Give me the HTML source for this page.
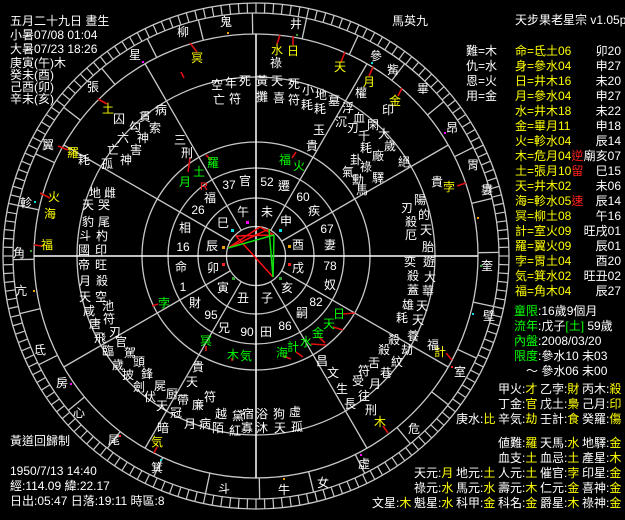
<!DOCTYPE html>
<html><head><meta charset="utf-8"><style>
html,body{margin:0;padding:0;background:#000;}
svg{display:block;}
text{font-family:"Liberation Sans","Noto Sans CJK TC","WenQuanYi Zen Hei",sans-serif;font-size:12px;fill:#fff;}
.c{text-anchor:middle;dominant-baseline:central;}
.y{fill:#ffff00;} .g{fill:#00ff00;} .r{fill:#ff2020;} .gr{fill:#8a8a8a;}
</style></head><body>
<svg width="625" height="520" viewBox="0 0 625 520" xmlns="http://www.w3.org/2000/svg">
<rect width="625" height="520" fill="#000"/>
<g fill="none" stroke="#c8c8c8" stroke-width="1.3">
<circle cx="256" cy="256" r="29.5"/>
<circle cx="256" cy="256" r="58"/>
<circle cx="256" cy="256" r="88"/>
<circle cx="256" cy="256" r="114"/>
<circle cx="256" cy="256" r="179"/>
<circle cx="256" cy="256" r="222"/>
<circle cx="256" cy="256" r="243"/>
<circle cx="256" cy="256" r="253"/>
</g>
<g id="spokes" stroke="#c8c8c8" stroke-width="1.3"></g>
<g id="ticks" stroke="#c8c8c8" stroke-width="1.2"></g>
<g id="mans" stroke="#c8c8c8" stroke-width="1.3"></g>
<line x1="34" y1="256" x2="478" y2="256" stroke="#fff" stroke-width="1.5"/>
<line x1="256" y1="34" x2="256" y2="478" stroke="#fff" stroke-width="1.5"/>
<g stroke-width="1.5">
<line x1="228" y1="248" x2="269" y2="229" stroke="#ff1010"/>
<line x1="228" y1="248" x2="260" y2="227" stroke="#ff1010"/>
<line x1="236" y1="236" x2="273" y2="277" stroke="#ff1010"/>
<line x1="236" y1="236" x2="274" y2="235" stroke="#ff1010"/>
<line x1="260" y1="227" x2="274" y2="235" stroke="#ff1010"/>
<line x1="228" y1="248" x2="274" y2="235" stroke="#10e010"/>
<line x1="269" y1="229" x2="273" y2="277" stroke="#10e010"/>
<line x1="274" y1="235" x2="273" y2="277" stroke="#10e010"/>
</g>
<g stroke="#e01010" stroke-width="1.6">
<line x1="190" y1="43" x2="197" y2="52"/><line x1="280" y1="35" x2="277" y2="44"/><line x1="293" y1="36" x2="293" y2="45"/>
<line x1="345" y1="52" x2="341" y2="62"/><line x1="373" y1="67" x2="369" y2="76"/><line x1="402" y1="88" x2="398" y2="96"/>
<line x1="98" y1="99" x2="107" y2="104"/><line x1="58" y1="146" x2="68" y2="150"/><line x1="40" y1="193" x2="50" y2="198"/>
<line x1="34" y1="245" x2="42" y2="246"/><line x1="466" y1="183" x2="457" y2="186"/><line x1="452" y1="360" x2="446" y2="353"/>
<line x1="388" y1="433" x2="383" y2="426"/><line x1="154" y1="453" x2="157" y2="447"/><line x1="184" y1="78" x2="181" y2="72"/>
<line x1="206" y1="155" x2="211" y2="160"/><line x1="190" y1="158" x2="188" y2="172"/><line x1="296" y1="152" x2="292" y2="158"/>
<line x1="152" y1="306" x2="158" y2="304"/><line x1="206" y1="351" x2="206" y2="346"/><line x1="232" y1="361" x2="232" y2="358"/>
<line x1="291" y1="359" x2="283" y2="356"/><line x1="303" y1="357" x2="296" y2="352"/><line x1="326" y1="345" x2="311" y2="344"/>
<line x1="325" y1="343" x2="319" y2="337"/><line x1="343" y1="330" x2="333" y2="327"/><line x1="355" y1="313" x2="343" y2="314"/>
</g>
<g class="c">
<text x="226" y="22">鬼</text><text x="296" y="24">井</text><text x="376" y="56">參</text><text x="393" y="70">觜</text>
<text x="423" y="89">畢</text><text x="452" y="128">昂</text><text x="473" y="165">胃</text><text x="487" y="190">婁</text>
<text x="487" y="266">奎</text><text x="489" y="316">壁</text><text x="460" y="372">室</text><text x="414" y="429">危</text>
<text x="364" y="464">虛</text><text x="323" y="483">女</text><text x="284" y="490">牛</text><text x="224" y="489">斗</text>
<text x="157" y="468">箕</text><text x="114" y="440">尾</text><text x="79" y="413">心</text><text x="62" y="383">房</text>
<text x="40" y="350">氐</text><text x="21" y="291">亢</text><text x="19" y="253">角</text><text x="26" y="203">軫</text>
<text x="48" y="145">翼</text><text x="93" y="87">張</text><text x="135" y="55">星</text><text x="183" y="32">柳</text>
</g>
<g>
<rect x="227" y="32" width="2" height="2" fill="#f0a000"/><rect x="296" y="34" width="2" height="2" fill="#30a030"/>
<rect x="371" y="62" width="2" height="2" fill="#00e0e0"/><rect x="142" y="61" width="2" height="2" fill="#ff00ff"/>
<rect x="444" y="132" width="2" height="2" fill="#ff00ff"/>
<rect x="477" y="217" width="2" height="2" fill="#f0a000"/><rect x="480" y="265" width="2" height="2" fill="#30a030"/>
<rect x="472" y="313" width="2" height="2" fill="#00e0e0"/><rect x="451" y="366" width="2" height="2" fill="#ff2020"/>
<rect x="360" y="454" width="2" height="2" fill="#ff00ff"/><rect x="283" y="478" width="2" height="2" fill="#f0a000"/>
<rect x="160" y="459" width="2" height="2" fill="#00e0e0"/><rect x="119" y="435" width="2" height="2" fill="#ff2020"/>
<rect x="70" y="383" width="2" height="2" fill="#ff00ff"/><rect x="34" y="201" width="2" height="2" fill="#00e0e0"/>
<rect x="30" y="250" width="2" height="2" fill="#30a030"/><rect x="33" y="290" width="2" height="2" fill="#f0a000"/>
</g>
<g class="c y">
<text x="197" y="58" class="y">冥</text><text x="277" y="50" class="y">水</text><text x="293" y="51" class="y">日</text>
<text x="340" y="67" class="y">天</text><text x="369" y="82" class="y">月</text><text x="395" y="101" class="y">金</text>
<text x="449" y="187" class="y">孛</text><text x="440" y="352" class="y">計</text><text x="380" y="422" class="y">木</text>
<text x="157" y="442" class="y">気</text><text x="47" y="245" class="y">福</text><text x="54" y="197" class="y">火</text>
<text x="50" y="214" class="y">海</text><text x="73" y="153" class="y">羅</text><text x="108" y="109" class="y">土</text>
</g>
<g class="c">
<text x="213" y="163" class="g">羅</text><text x="185" y="182" class="g">月</text><text x="199" y="172" class="g">土</text>
<text x="204" y="187" class="r" style="font-size:11px">R</text>
<text x="285" y="160" class="g">福</text><text x="299" y="166" class="g">火</text><text x="164" y="303" class="g">孛</text>
<text x="206" y="341" class="g">冥</text><text x="233" y="355" class="g">木</text><text x="246" y="356" class="g">気</text>
<text x="282" y="353" class="g">海</text><text x="293" y="347" class="g">計</text><text x="306" y="342" class="g">水</text>
<text x="318" y="333" class="g">金</text><text x="329" y="324" class="g">天</text><text x="339" y="314" class="g">日</text>
</g>
<g class="c">
<text x="245" y="181">官</text><text x="284" y="186">遷</text><text x="314" y="211">疾</text><text x="330" y="245">妻</text>
<text x="330" y="285">奴</text><text x="302" y="313">嗣</text><text x="266" y="332">田</text><text x="224" y="328">兄</text>
<text x="195" y="303">財</text><text x="181" y="267">命</text><text x="185" y="228">相</text><text x="210" y="198">福</text>
</g>
<g class="c gr">
<text x="229" y="185">37</text><text x="267" y="182">52</text><text x="303" y="197">60</text><text x="327" y="229">67</text>
<text x="330" y="266">78</text><text x="316" y="302">82</text><text x="285" y="326">86</text><text x="247" y="332">90</text>
<text x="211" y="315">95</text><text x="183" y="287">1</text><text x="183" y="247">16</text><text x="198" y="210">26</text>
</g>
<g class="c">
<text x="243" y="212">午</text><text x="267" y="212">未</text><text x="286" y="221">申</text><text x="298" y="245">酉</text>
<text x="298" y="268">戌</text><text x="287" y="288">亥</text><text x="267" y="298">子</text><text x="243" y="298">丑</text>
<text x="223" y="288">寅</text><text x="213" y="268">卯</text><text x="212" y="246">辰</text><text x="223" y="223">巳</text>
</g>
<g>
<rect x="246" y="221" width="3" height="3" fill="#ff00ff"/><rect x="231" y="229" width="3" height="3" fill="#00e0e0"/>
<rect x="222" y="246" width="3" height="3" fill="#f0a000"/><rect x="222" y="263" width="3" height="3" fill="#ff2020"/>
<rect x="232" y="277" width="3" height="3" fill="#30a030"/><rect x="279" y="229" width="3" height="3" fill="#00e0e0"/>
<rect x="288" y="245" width="3" height="3" fill="#f0a000"/><rect x="288" y="263" width="3" height="3" fill="#ff2020"/>
<rect x="279" y="277" width="3" height="3" fill="#30a030"/>
</g>
<g class="c">
<text x="217" y="85">空</text><text x="231" y="83">年</text><text x="245" y="81">死</text><text x="262" y="81">黃</text><text x="277" y="81">天</text><text x="294" y="84">死</text><text x="308" y="90">小</text><text x="321" y="95">地</text><text x="334" y="101">墓</text>
<text x="219" y="100">亡</text><text x="235" y="99">符</text><text x="262" y="97">攤</text><text x="279" y="98">喜</text><text x="294" y="100">符</text><text x="307" y="105">耗</text><text x="320" y="109">耗</text>
<text x="276" y="63">祿</text><text x="361" y="93">權</text><text x="388" y="110">印</text>
<text x="348" y="108">浮</text><text x="341" y="122">沉</text><text x="359" y="118">血</text><text x="373" y="125">閑</text><text x="353" y="128">刃</text><text x="364" y="136">千</text><text x="384" y="134">大</text><text x="366" y="148">耗</text><text x="390" y="146">歲</text><text x="378" y="156">廠</text><text x="404" y="162">絕</text>
<text x="319" y="130">玉</text><text x="312" y="146">貴</text><text x="356" y="160">卦</text><text x="366" y="167">祿</text><text x="348" y="172">氣</text><text x="358" y="180">勳</text><text x="378" y="178">驛</text><text x="362" y="190">馬</text>
<text x="437" y="182">貴</text>
<text x="161" y="110">病</text><text x="145" y="117">貫</text><text x="155" y="128">索</text><text x="135" y="127">勾</text><text x="143" y="138">神</text><text x="123" y="138">六</text><text x="136" y="150">害</text><text x="113" y="150">亡</text><text x="126" y="160">神</text><text x="107" y="164">孤</text>
<text x="180" y="140">三</text><text x="187" y="153">刑</text><text x="119" y="119">囚</text><text x="84" y="160">耗</text>
<text x="95" y="193">地</text><text x="110" y="193">雌</text><text x="88" y="205">天</text><text x="104" y="205">哭</text><text x="88" y="222">豹</text><text x="104" y="222">尾</text><text x="85" y="236">斗</text><text x="102" y="236">杓</text><text x="84" y="250">國</text><text x="101" y="250">印</text>
<text x="84" y="265">帝</text><text x="101" y="265">旺</text><text x="85" y="281">月</text><text x="102" y="281">殺</text><text x="85" y="297">天</text><text x="101" y="297">空</text>
<text x="89" y="311">咸</text><text x="108" y="306">池</text><text x="95" y="324">唐</text><text x="109" y="319">符</text><text x="115" y="332">刃</text><text x="100" y="338">飛</text><text x="108" y="351">臨</text><text x="121" y="342">官</text><text x="130" y="353">駕</text>
<text x="118" y="365">歲</text><text x="139" y="362">頭</text><text x="128" y="375">披</text><text x="147" y="374">鋒</text><text x="139" y="387">劍</text><text x="160" y="386">屍</text><text x="150" y="397">伏</text><text x="162" y="406">天</text><text x="172" y="394">厨</text>
<text x="176" y="413">冠</text><text x="183" y="400">帶</text><text x="190" y="424">月</text><text x="198" y="405">廉</text><text x="210" y="397">符</text><text x="205" y="424">病</text><text x="221" y="414">越</text><text x="218" y="428">陌</text><text x="238" y="416">黛</text><text x="235" y="431">紅</text>
<text x="198" y="367">貴</text><text x="192" y="382">天</text><text x="163" y="428">暗</text>
<text x="248" y="414">宿</text><text x="262" y="414">浴</text><text x="279" y="414">狗</text><text x="295" y="412">虛</text><text x="247" y="428">寡</text><text x="262" y="428">沐</text><text x="280" y="428">天</text><text x="297" y="427">孤</text>
<text x="322" y="361">昌</text><text x="333" y="373">文</text><text x="342" y="389">生</text><text x="350" y="404">長</text><text x="358" y="381">受</text><text x="364" y="396">往</text><text x="364" y="371">符</text><text x="375" y="384">月</text><text x="374" y="363">舌</text><text x="386" y="373">巷</text>
<text x="384" y="350">殺</text><text x="397" y="362">紋</text><text x="394" y="340">殺</text><text x="407" y="350">劫</text><text x="371" y="410">刑</text><text x="433" y="345">福</text>
<text x="420" y="200">陽</text><text x="407" y="208">刃</text><text x="424" y="215">的</text><text x="411" y="222">殺</text><text x="426" y="230">天</text><text x="411" y="235">厄</text><text x="428" y="247">胎</text>
<text x="410" y="262">奕</text><text x="429" y="262">遊</text><text x="413" y="276">殺</text><text x="430" y="277">大</text><text x="413" y="290">蓋</text><text x="428" y="291">華</text><text x="408" y="305">雄</text><text x="422" y="306">天</text><text x="402" y="318">耗</text><text x="418" y="320">天</text><text x="413" y="336">養</text>
</g>
<g>
<text x="10" y="25">五月二十九日 晝生</text>
<text x="10" y="39">小暑07/08 01:04</text>
<text x="10" y="53">大暑07/23 18:26</text>
<text x="10" y="67">庚寅(午)木</text>
<text x="10" y="79">癸未(酉)</text>
<text x="10" y="91">己酉(卯)</text>
<text x="10" y="103">辛未(亥)</text>
<text x="10" y="445">黃道回歸制</text>
<text x="10" y="475">1950/7/13 14:40</text>
<text x="10" y="490">經:114.09 緯:22.17</text>
<text x="10" y="505">日出:05:47 日落:19:11 時區:8</text>
<text x="410" y="25" text-anchor="middle">馬英九</text>
<text x="515" y="24">天步果老星宗 v1.05p</text>
<text x="466" y="55">難=木</text><text x="466" y="70">仇=水</text><text x="466" y="85">恩=火</text><text x="466" y="100">用=金</text>
</g>
<g class="y">
<text x="515" y="55" class="y">命=氐土06</text><text x="515" y="70" class="y">身=參水04</text><text x="515" y="85" class="y">日=井木16</text>
<text x="515" y="100" class="y">月=參水04</text><text x="515" y="115" class="y">水=井木18</text><text x="515" y="130" class="y">金=畢月11</text>
<text x="515" y="145" class="y">火=軫水04</text><text x="515" y="160" class="y">木=危月04<tspan class="r">逆</tspan></text><text x="515" y="175" class="y">土=張月10<tspan class="r">留</tspan></text>
<text x="515" y="190" class="y">天=井木02</text><text x="515" y="205" class="y">海=軫水05<tspan class="r">速</tspan></text><text x="515" y="220" class="y">冥=柳土08</text>
<text x="515" y="235" class="y">計=室火09</text><text x="515" y="250" class="y">羅=翼火09</text><text x="515" y="265" class="y">孛=胃土04</text>
<text x="515" y="280" class="y">気=箕水02</text><text x="515" y="295" class="y">福=角木04</text>
</g>
<g text-anchor="end">
<text x="621" y="55">卯20</text><text x="621" y="70">申27</text><text x="621" y="85">未20</text><text x="621" y="100">申27</text>
<text x="621" y="115">未22</text><text x="621" y="130">申18</text><text x="621" y="145">辰14</text><text x="621" y="160">廟亥07</text>
<text x="621" y="175">巳15</text><text x="621" y="190">未06</text><text x="621" y="205">辰14</text><text x="621" y="220">午16</text>
<text x="621" y="235">旺戌01</text><text x="621" y="250">辰01</text><text x="621" y="265">酉20</text><text x="621" y="280">旺丑02</text>
<text x="621" y="295">辰27</text>
</g>
<g>
<text x="514" y="315"><tspan class="g">童限</tspan>:16歲9個月</text>
<text x="514" y="330"><tspan class="g">流年</tspan>:戊子<tspan class="g">[土]</tspan>  59歲</text>
<text x="514" y="345"><tspan class="g">內盤</tspan>:2008/03/20</text>
<text x="514" y="360"><tspan class="g">限度</tspan>:參水10  未03</text>
<text x="526" y="375">～ 參水06  未00</text>
<text x="498" y="393">甲火:<tspan class="y">才</tspan></text><text x="540" y="393">乙孛:<tspan class="y">財</tspan></text><text x="582" y="393">丙木:<tspan class="y">殺</tspan></text>
<text x="498" y="408">丁金:<tspan class="y">官</tspan></text><text x="540" y="408">戊土:<tspan class="y">梟</tspan></text><text x="582" y="408">己月:<tspan class="y">印</tspan></text>
<text x="456" y="423">庚水:<tspan class="y">比</tspan></text><text x="498" y="423">辛気:<tspan class="y">劫</tspan></text><text x="540" y="423">壬計:<tspan class="y">食</tspan></text><text x="582" y="423">癸羅:<tspan class="y">傷</tspan></text>
<text x="498" y="447">値難:<tspan class="y">羅</tspan></text><text x="540" y="447">天馬:<tspan class="y">水</tspan></text><text x="582" y="447">地驛:<tspan class="y">金</tspan></text>
<text x="498" y="462">血支:<tspan class="y">土</tspan></text><text x="540" y="462">血忌:<tspan class="y">土</tspan></text><text x="582" y="462">產星:<tspan class="y">木</tspan></text>
<text x="414" y="477">天元:<tspan class="y">月</tspan></text><text x="456" y="477">地元:<tspan class="y">土</tspan></text><text x="498" y="477">人元:<tspan class="y">土</tspan></text><text x="540" y="477">催官:<tspan class="y">孛</tspan></text><text x="582" y="477">印星:<tspan class="y">金</tspan></text>
<text x="414" y="492">祿元:<tspan class="y">水</tspan></text><text x="456" y="492">馬元:<tspan class="y">水</tspan></text><text x="498" y="492">壽元:<tspan class="y">木</tspan></text><text x="540" y="492">仁元:<tspan class="y">金</tspan></text><text x="582" y="492">喜神:<tspan class="y">金</tspan></text>
<text x="372" y="507">文星:<tspan class="y">木</tspan></text><text x="414" y="507">魁星:<tspan class="y">水</tspan></text><text x="456" y="507">科甲:<tspan class="y">金</tspan></text><text x="498" y="507">科名:<tspan class="y">金</tspan></text><text x="540" y="507">爵星:<tspan class="y">木</tspan></text><text x="582" y="507">祿神:<tspan class="y">金</tspan></text>
</g>
<script>
(function(){
var ns="http://www.w3.org/2000/svg",cx=256,cy=256;
function L(g,a,r1,r2){var t=a*Math.PI/180,l=document.createElementNS(ns,"line");
l.setAttribute("x1",cx+r1*Math.cos(t));l.setAttribute("y1",cy+r1*Math.sin(t));
l.setAttribute("x2",cx+r2*Math.cos(t));l.setAttribute("y2",cy+r2*Math.sin(t));g.appendChild(l);}
var s=document.getElementById("spokes");
for(var i=0;i<12;i++){if(i%3)L(s,i*30,29.5,222);}
var k=document.getElementById("ticks");
for(var i=0;i<180;i++)L(k,i*2,243,253);
var m=document.getElementById("mans");
for(var i=0;i<28;i++)L(m,-78+i*360/28,222,243);
})();
</script>
</svg>
</body></html>
